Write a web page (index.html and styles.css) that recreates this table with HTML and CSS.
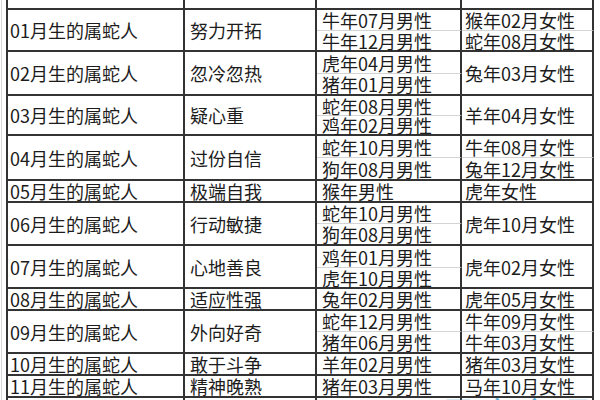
FILE: index.html
```html
<!DOCTYPE html>
<html lang="zh-CN">
<head>
<meta charset="utf-8">
<title>属蛇人</title>
<link rel="stylesheet" href="styles.css">
</head>
<body>
<div class="sheet">
  <div class="grid">
    <div class="c c1 hd"></div><div class="c c2 hd"></div><div class="c c3 hd"></div><div class="c c4 hd"></div>

    <div class="c c1 s2">01月生的属蛇人</div>
    <div class="c c2 s2">努力开拓</div>
    <div class="c c3 split">牛年07月男性</div>
    <div class="c c4 split">猴年02月女性</div>
    <div class="c c3">牛年12月男性</div>
    <div class="c c4">蛇年08月女性</div>

    <div class="c c1 s2">02月生的属蛇人</div>
    <div class="c c2 s2">忽冷忽热</div>
    <div class="c c3 split">虎年04月男性</div>
    <div class="c c4 s2">兔年03月女性</div>
    <div class="c c3">猪年01月男性</div>

    <div class="c c1 s2">03月生的属蛇人</div>
    <div class="c c2 s2">疑心重</div>
    <div class="c c3 split">蛇年08月男性</div>
    <div class="c c4 s2">羊年04月女性</div>
    <div class="c c3">鸡年02月男性</div>

    <div class="c c1 s2">04月生的属蛇人</div>
    <div class="c c2 s2">过份自信</div>
    <div class="c c3 split">蛇年10月男性</div>
    <div class="c c4 split">牛年08月女性</div>
    <div class="c c3">狗年08月男性</div>
    <div class="c c4">兔年12月女性</div>

    <div class="c c1">05月生的属蛇人</div>
    <div class="c c2">极端自我</div>
    <div class="c c3">猴年男性</div>
    <div class="c c4">虎年女性</div>

    <div class="c c1 s2">06月生的属蛇人</div>
    <div class="c c2 s2">行动敏捷</div>
    <div class="c c3 split">蛇年10月男性</div>
    <div class="c c4 s2">虎年10月女性</div>
    <div class="c c3">狗年08月男性</div>

    <div class="c c1 s2">07月生的属蛇人</div>
    <div class="c c2 s2">心地善良</div>
    <div class="c c3 split">鸡年01月男性</div>
    <div class="c c4 s2">虎年02月女性</div>
    <div class="c c3">虎年10月男性</div>

    <div class="c c1">08月生的属蛇人</div>
    <div class="c c2">适应性强</div>
    <div class="c c3">兔年02月男性</div>
    <div class="c c4">虎年05月女性</div>

    <div class="c c1 s2">09月生的属蛇人</div>
    <div class="c c2 s2">外向好奇</div>
    <div class="c c3 split">蛇年12月男性</div>
    <div class="c c4 split">牛年09月女性</div>
    <div class="c c3">猪年06月男性</div>
    <div class="c c4">牛年03月女性</div>

    <div class="c c1">10月生的属蛇人</div>
    <div class="c c2">敢于斗争</div>
    <div class="c c3">羊年02月男性</div>
    <div class="c c4">猪年03月女性</div>

    <div class="c c1">11月生的属蛇人</div>
    <div class="c c2">精神晚熟</div>
    <div class="c c3">猪年03月男性</div>
    <div class="c c4">马年10月女性</div>

    <div class="c c1 s2">12月生的属蛇人</div>
    <div class="c c2 s2">勤俭持家</div>
    <div class="c c3 split">猴年05月男性</div>
    <div class="c c4 s2">鼠年06月女性</div>
    <div class="c c3">龙年11月男性</div>
  </div>
  <div class="mark">星座命理网</div>
</div>
</body>
</html>
```

FILE: styles.css
```css
html, body {
  margin: 0;
  padding: 0;
  background: #ffffff;
}

.sheet {
  position: relative;
  width: 600px;
  height: 400px;
  overflow: hidden;
  padding-left: 6px;
  box-sizing: border-box;
  background: #ffffff;
  font-family: "Noto Sans CJK SC", "Noto Sans", sans-serif;
  font-size: 18px;
  color: #1c1c1c;
}

.sheet::before {
  content: "";
  position: absolute;
  left: 1px;
  top: 0;
  width: 1px;
  height: 400px;
  background: #d8d8d8;
}

.grid {
  display: grid;
  width: 588px;
  box-sizing: border-box;
  border-left: 2px solid #333333;
  grid-template-columns: 177px 132px 145px 132px;
  grid-template-rows:
    10px
    21px 21px
    22px 22px
    20px 20px
    22px 23px
    22px
    21px 22px
    22px 21px
    22px
    21px 22px
    22px
    22px
    22px 22px;
}

.c {
  box-sizing: border-box;
  border-right: 2px solid #333333;
  border-bottom: 2px solid #333333;
  display: flex;
  align-items: center;
  line-height: 18px;
  white-space: nowrap;
}

.s2 {
  grid-row: span 2;
}

.split {
  border-bottom: 1px solid #d4d4d4;
}

.c1 { padding-left: 2px; }
.c2 { padding-left: 5px; }
.c3 { padding-left: 5px; }
.c4 { padding-left: 3px; }

.mark {
  position: absolute;
  left: 440px;
  top: 393px;
  font-size: 36px;
  line-height: 40px;
  color: rgba(40, 150, 205, 0.75);
  letter-spacing: 2px;
  white-space: nowrap;
}
```
